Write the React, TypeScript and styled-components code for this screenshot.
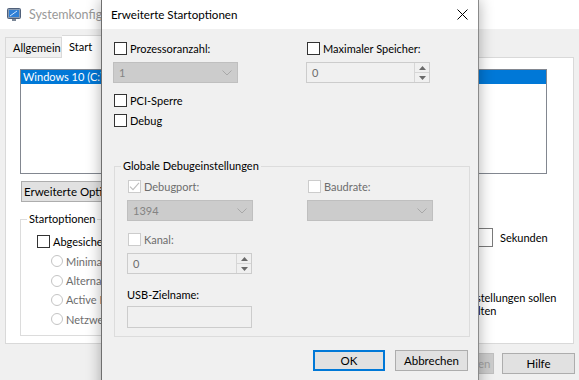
import React from "react";
import styled, { createGlobalStyle } from "styled-components";

const FONT = `"Lato", "Noto Sans", "Liberation Sans", sans-serif`;

const Global = createGlobalStyle`
  html, body { margin: 0; padding: 0; }
  body { font-family: ${FONT}; font-size: 11px; background: #f0f0f0; color: #000; }
  * { box-sizing: border-box; }
`;

const Screen = styled.div`
  position: relative;
  width: 579px;
  height: 380px;
  overflow: hidden;
  background: #f0f0f0;
`;

/* ---------- shared controls ---------- */

const CheckBox = styled.span<{ $disabled?: boolean }>`
  flex: 0 0 13px;
  width: 13px;
  height: 13px;
  border: 1px solid ${(p) => (p.$disabled ? "#cccccc" : "#333333")};
  background: #fff;
  display: flex;
  align-items: center;
  justify-content: center;
  margin-left: 1px;
`;

const CheckRow = styled.label<{ $disabled?: boolean }>`
  display: flex;
  align-items: center;
  gap: 3px;
  height: 13px;
  line-height: 13px;
  white-space: nowrap;
  color: ${(p) => (p.$disabled ? "#6d6d6d" : "#000")};
`;

const Check = ({ label, checked, disabled }: { label: string; checked?: boolean; disabled?: boolean }) => (
  <CheckRow $disabled={disabled}>
    <CheckBox $disabled={disabled}>
      {checked && (
        <svg width="11" height="11" viewBox="0 0 11 11">
          <path d="M1 5.6 L4 8.6 L10 1.8" fill="none" stroke={disabled ? "#bdbdbd" : "#000"} strokeWidth="1.1" />
        </svg>
      )}
    </CheckBox>
    <span>{label}</span>
  </CheckRow>
);

const RadioCircle = styled.span`
  flex: 0 0 12px;
  width: 12px;
  height: 12px;
  border-radius: 50%;
  border: 1px solid #c4c4c4;
  background: #fff;
`;

const RadioRow = styled.label`
  display: flex;
  align-items: center;
  gap: 3px;
  height: 20px;
  margin-left: 15px;
  white-space: nowrap;
  color: #6d6d6d;
`;

const Combo = styled.div<{ $w: number }>`
  width: ${(p) => p.$w}px;
  height: 21px;
  background: #cccccc;
  border: 1px solid #bfbfbf;
  display: flex;
  align-items: center;
  justify-content: space-between;
  padding: 0 5px 0 5px;
  color: #838383;
`;

const Chevron = () => (
  <svg width="10" height="6" viewBox="0 0 10 6">
    <path d="M0.5 0.5 L5 5 L9.5 0.5" fill="none" stroke="#a8a8a8" strokeWidth="1" />
  </svg>
);

const SpinBox = styled.div<{ $w: number }>`
  width: ${(p) => p.$w}px;
  height: 21px;
  border: 1px solid #cccccc;
  background: #f0f0f0;
  display: flex;
  color: #6d6d6d;
`;

const SpinValue = styled.div`
  flex: 1;
  display: flex;
  align-items: center;
  padding-left: 5px;
`;

const SpinButtons = styled.div`
  width: 15px;
  display: flex;
  flex-direction: column;
  border-left: 1px solid #d6d6d6;
`;

const SpinBtn = styled.div<{ $down?: boolean }>`
  flex: 1;
  display: flex;
  align-items: center;
  justify-content: center;
  border-bottom: ${(p) => (p.$down ? "none" : "1px solid #d6d6d6")};
`;

const Spin = ({ w, value }: { w: number; value: string }) => (
  <SpinBox $w={w}>
    <SpinValue>{value}</SpinValue>
    <SpinButtons>
      <SpinBtn>
        <svg width="7" height="4" viewBox="0 0 7 4">
          <path d="M0 4 L3.5 0 L7 4 Z" fill="#6a6a6a" />
        </svg>
      </SpinBtn>
      <SpinBtn $down>
        <svg width="7" height="4" viewBox="0 0 7 4">
          <path d="M0 0 L3.5 4 L7 0 Z" fill="#6a6a6a" />
        </svg>
      </SpinBtn>
    </SpinButtons>
  </SpinBox>
);

const TextField = styled.div<{ $w: number }>`
  width: ${(p) => p.$w}px;
  height: 22px;
  border: 1px solid #cccccc;
  background: #f0f0f0;
`;

const Button = styled.button<{ $w: number; $default?: boolean; $disabled?: boolean }>`
  width: ${(p) => p.$w}px;
  height: 21px;
  padding: 0;
  font-family: ${FONT};
  font-size: 11.5px;
  color: ${(p) => (p.$disabled ? "#a0a0a0" : "#000")};
  background: ${(p) => (p.$disabled ? "#cccccc" : "#e1e1e1")};
  border: ${(p) => (p.$default ? "2px solid #0078d7" : p.$disabled ? "1px solid #bfbfbf" : "1px solid #adadad")};
  display: flex;
  align-items: center;
  justify-content: center;
  white-space: nowrap;
  overflow: hidden;
`;

const GroupBox = styled.div<{ $bg: string; $border: string }>`
  display: flex;
  flex-direction: column;
  border: 1px solid ${(p) => p.$border};
  background: ${(p) => p.$bg};
`;

const GroupCaption = styled.div<{ $bg: string; $indent: number }>`
  align-self: flex-start;
  margin: -8px 0 0 ${(p) => p.$indent}px;
  padding: 0 2px;
  height: 14px;
  line-height: 14px;
  background: ${(p) => p.$bg};
  white-space: nowrap;
`;

/* ---------- background window (Systemkonfiguration) ---------- */

const BackWindow = styled.div`
  display: flex;
  flex-direction: column;
  width: 579px;
  height: 380px;
`;

const BackTitleBar = styled.div`
  height: 29px;
  flex: 0 0 29px;
  background: #fff;
  display: flex;
  align-items: center;
  gap: 8px;
  padding-left: 7px;
  color: #999999;
  font-size: 12.5px;
`;

const BackBody = styled.div`
  flex: 1;
  display: flex;
  flex-direction: column;
  padding: 6px 5px 0 5px;
`;

const TabStrip = styled.div`
  display: flex;
  align-items: flex-end;
  height: 23px;
  margin-bottom: -1px;
  position: relative;
  z-index: 1;
`;

const Tab = styled.div<{ $active?: boolean }>`
  height: ${(p) => (p.$active ? 23 : 21)}px;
  padding: 0 7px;
  display: flex;
  align-items: center;
  border: 1px solid #d9d9d9;
  border-bottom-color: ${(p) => (p.$active ? "#fff" : "#d9d9d9")};
  border-left-width: ${(p) => (p.$active ? 0 : 1)}px;
  background: ${(p) => (p.$active ? "#fff" : "#f0f0f0")};
  width: ${(p) => (p.$active ? 40 : 57)}px;
`;

const TabPanel = styled.div`
  height: 287px;
  background: #fff;
  border: 1px solid #d9d9d9;
  display: flex;
  flex-direction: column;
  padding: 11px 26px 0 14px;
`;

const OsList = styled.div`
  height: 105px;
  border: 1px solid #828790;
  background: #fff;
`;

const OsItem = styled.div<{ $selected?: boolean }>`
  height: 14px;
  line-height: 14px;
  padding-left: 2px;
  white-space: nowrap;
  overflow: hidden;
  background: ${(p) => (p.$selected ? "#0078d7" : "transparent")};
  color: ${(p) => (p.$selected ? "#fff" : "#000")};
`;

const ListButtons = styled.div`
  display: flex;
  gap: 8px;
  margin: 7px 0 0 1px;
`;

const LowerArea = styled.div`
  display: grid;
  grid-template-columns: 270px 1fr;
  column-gap: 117px;
  margin-top: 17px;
`;

const StartOptionsBody = styled.div`
  display: flex;
  flex-direction: column;
  padding: 6px 0 6px 15px;
  height: 109px;
`;

const FirstOptionRow = styled.div`
  display: flex;
  align-items: center;
  height: 20px;
`;

const RightColumn = styled.div`
  display: flex;
  flex-direction: column;
  padding-top: 9px;
`;

const TimeoutRow = styled.div`
  display: flex;
  align-items: center;
  gap: 7px;
`;

const TimeoutField = styled.div`
  width: 86px;
  height: 19px;
  border: 1px solid #7a7a7a;
  background: #fff;
`;

const PermanentRow = styled.label`
  display: flex;
  align-items: flex-start;
  gap: 3px;
  margin: 45px 0 0 -7px;
`;

const PermanentText = styled.span`
  line-height: 12.5px;
  width: 152px;
`;

const BackButtons = styled.div`
  display: flex;
  justify-content: flex-end;
  gap: 8px;
  padding: 9px 0 0 0;
  margin-right: -1px;
`;

const MonitorIcon = () => (
  <svg width="14" height="14" viewBox="0 0 14 14">
    <rect x="0.5" y="0.5" width="13" height="10" rx="1" fill="#8a9bb0" stroke="#50607a" />
    <rect x="2" y="2" width="10" height="7" fill="#2e7fd6" />
    <path d="M3 8 L10 3" stroke="#cfe6ff" strokeWidth="1" />
    <rect x="5" y="11" width="4" height="2" fill="#7b8797" />
  </svg>
);

/* ---------- dialog (Erweiterte Startoptionen) ---------- */

const Dialog = styled.div`
  position: absolute;
  left: 101px;
  top: 0;
  width: 378px;
  height: 400px;
  display: flex;
  flex-direction: column;
  background: #f0f0f0;
  border-left: 1px solid #6f6f6f;
  border-right: 1px solid #8a8a8a;
  box-shadow: 0 0 14px rgba(0, 0, 0, 0.32);
  z-index: 5;
`;

const DialogTitleBar = styled.div`
  height: 29px;
  flex: 0 0 29px;
  background: #fff;
  display: flex;
  align-items: center;
  justify-content: space-between;
  padding-left: 9px;
  font-size: 11.6px;
`;

const CloseBox = styled.div`
  width: 32px;
  height: 29px;
  display: flex;
  align-items: center;
  justify-content: center;
`;

const DialogBody = styled.div`
  display: flex;
  flex-direction: column;
  padding: 13px 10px 0 11px;
`;

const TwoCol = styled.div<{ $first: number }>`
  display: grid;
  grid-template-columns: ${(p) => p.$first}px 1fr;
  row-gap: 7px;
`;

const StackTight = styled.div<{ $gap: number; $top: number }>`
  display: flex;
  flex-direction: column;
  gap: ${(p) => p.$gap}px;
  margin-top: ${(p) => p.$top}px;
`;

const DebugGroup = styled(GroupBox)`
  margin: 39px 0 0 1px;
  width: 356px;
`;

const DebugBody = styled.div`
  display: flex;
  flex-direction: column;
  padding: 7px 0 8px 12px;
`;

const KanalBlock = styled.div`
  display: flex;
  flex-direction: column;
  gap: 7px;
  margin-top: 12px;
`;

const UsbLabel = styled.div`
  height: 14px;
  line-height: 14px;
  margin-top: 14px;
`;

const UsbField = styled(TextField)`
  margin-top: 4px;
`;

const DialogButtons = styled.div`
  display: flex;
  justify-content: flex-end;
  gap: 10px;
  margin-top: 13px;
`;

export default function App() {
  return (
    <>
      <Global />
      <Screen>
        <BackWindow>
          <BackTitleBar>
            <MonitorIcon />
            <span>Systemkonfiguration</span>
          </BackTitleBar>
          <BackBody>
            <TabStrip>
              <Tab>Allgemein</Tab>
              <Tab $active>Start</Tab>
            </TabStrip>
            <TabPanel>
              <OsList>
                <OsItem $selected>Windows 10 (C:\WINDOWS) : Aktuelles Betriebssystem; Standardbetriebssystem</OsItem>
              </OsList>
              <ListButtons>
                <Button $w={118}>Erweiterte Optionen...</Button>
              </ListButtons>
              <LowerArea>
                <GroupBox $bg="#fff" $border="#dcdcdc">
                  <GroupCaption $bg="#fff" $indent={6}>Startoptionen</GroupCaption>
                  <StartOptionsBody>
                    <FirstOptionRow>
                      <Check label="Abgesicherter Start" />
                    </FirstOptionRow>
                    <RadioRow><RadioCircle />Minimal</RadioRow>
                    <RadioRow><RadioCircle />Alternative Shell</RadioRow>
                    <RadioRow><RadioCircle />Active Directory-Reparatur</RadioRow>
                    <RadioRow><RadioCircle />Netzwerk</RadioRow>
                  </StartOptionsBody>
                </GroupBox>
                <RightColumn>
                  <TimeoutRow>
                    <TimeoutField />
                    <span>Sekunden</span>
                  </TimeoutRow>
                  <PermanentRow>
                    <CheckBox />
                    <PermanentText>Alle Starteinstellungen sollen dauerhaft gelten</PermanentText>
                  </PermanentRow>
                </RightColumn>
              </LowerArea>
            </TabPanel>
            <BackButtons>
              <Button $w={73} $disabled>Übernehmen</Button>
              <Button $w={73}>Hilfe</Button>
            </BackButtons>
          </BackBody>
        </BackWindow>

        <Dialog>
          <DialogTitleBar>
            <span>Erweiterte Startoptionen</span>
            <CloseBox>
              <svg width="11" height="11" viewBox="0 0 11 11">
                <path d="M0.5 0.5 L10.5 10.5 M10.5 0.5 L0.5 10.5" stroke="#000" strokeWidth="1" />
              </svg>
            </CloseBox>
          </DialogTitleBar>
          <DialogBody>
            <TwoCol $first={193}>
              <Check label="Prozessoranzahl:" />
              <Check label="Maximaler Speicher:" />
              <Combo $w={125}>
                <span>1</span>
                <Chevron />
              </Combo>
              <Spin w={124} value="0" />
            </TwoCol>
            <StackTight $gap={7} $top={11}>
              <Check label="PCI-Sperre" />
              <Check label="Debug" />
            </StackTight>
            <DebugGroup $bg="#f0f0f0" $border="#dcdcdc">
              <GroupCaption $bg="#f0f0f0" $indent={6}>Globale Debugeinstellungen</GroupCaption>
              <DebugBody>
                <TwoCol $first={180}>
                  <Check label="Debugport:" checked disabled />
                  <Check label="Baudrate:" disabled />
                  <Combo $w={126}>
                    <span>1394</span>
                    <Chevron />
                  </Combo>
                  <Combo $w={126}>
                    <span />
                    <Chevron />
                  </Combo>
                </TwoCol>
                <KanalBlock>
                  <Check label="Kanal:" disabled />
                  <Spin w={125} value="0" />
                </KanalBlock>
                <UsbLabel>USB-Zielname:</UsbLabel>
                <UsbField $w={125} />
              </DebugBody>
            </DebugGroup>
            <DialogButtons>
              <Button $w={72} $default>OK</Button>
              <Button $w={73}>Abbrechen</Button>
            </DialogButtons>
          </DialogBody>
        </Dialog>
      </Screen>
    </>
  );
}
